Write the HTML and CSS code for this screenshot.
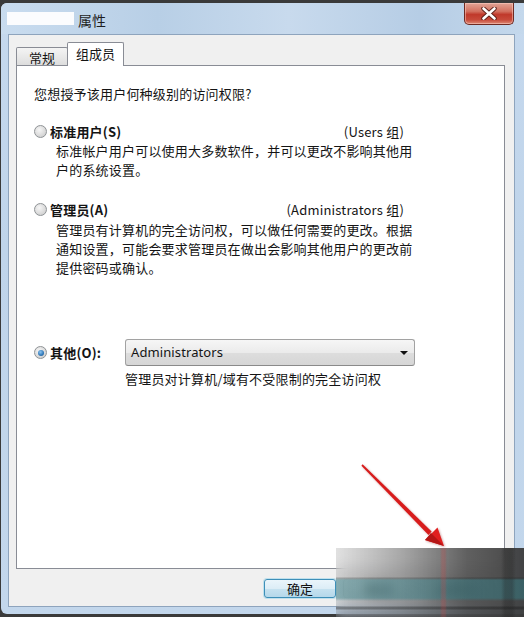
FILE: index.html
```html
<!DOCTYPE html>
<html lang="zh-CN">
<head>
    <meta charset="UTF-8">
    <meta name="viewport" content="width=device-width, initial-scale=1.0">
    <title>属性</title>
    <link rel="stylesheet" href="styles.css">
</head>
<body>
    <div class="window">
        <div class="titlebar">
            <span class="title-mask"></span>
            <span class="title">属性</span>
            <button class="close-btn" aria-label="关闭">
                <svg width="16" height="13" viewBox="0 0 16 13">
                    <path d="M2.5 1.5 L13.5 11.5 M13.5 1.5 L2.5 11.5" stroke="#5a1e16" stroke-width="4.4" stroke-linecap="round"/>
                    <path d="M2.5 1.5 L13.5 11.5 M13.5 1.5 L2.5 11.5" stroke="#ffffff" stroke-width="2.6" stroke-linecap="round"/>
                </svg>
            </button>
        </div>

        <div class="client">
            <div class="tabs">
                <div class="tab">常规</div>
                <div class="tab active">组成员</div>
            </div>

            <div class="panel">
                <p class="question">您想授予该用户何种级别的访问权限?</p>

                <div class="option first">
                    <div class="option-head">
                        <span class="radio"></span>
                        <span class="label">标准用户(S)</span>
                        <span class="group">(Users 组)</span>
                    </div>
                    <p class="desc">标准帐户用户可以使用大多数软件，并可以更改不影响其他用<br>户的系统设置。</p>
                </div>

                <div class="option second">
                    <div class="option-head">
                        <span class="radio"></span>
                        <span class="label">管理员(A)</span>
                        <span class="group">(Administrators 组)</span>
                    </div>
                    <p class="desc">管理员有计算机的完全访问权，可以做任何需要的更改。根据<br>通知设置，可能会要求管理员在做出会影响其他用户的更改前<br>提供密码或确认。</p>
                </div>

                <div class="option other">
                    <div class="option-head">
                        <span class="radio checked"></span>
                        <span class="label">其他(O):</span>
                        <div class="select">
                            <span>Administrators</span>
                            <span class="caret"></span>
                        </div>
                    </div>
                    <p class="desc">管理员对计算机/域有不受限制的完全访问权</p>
                </div>
            </div>

            <div class="buttons">
                <button class="btn default">确定</button>
                <button class="btn">取消</button>
                <button class="btn">应用(A)</button>
            </div>
        </div>
    </div>

    <!-- flèche rouge au-dessus de la fenêtre -->
    <svg class="arrow" width="524" height="617" viewBox="0 0 524 617">
        <polygon points="362.6,464.2 361.4,465.8 428.5,535 431.6,531.4" fill="#d81c1c"/>
        <polygon points="444,546 437.5,527.5 425,540" fill="#e01f1f"/>
        <polygon points="444,546 431,533 425,540" fill="#b51515"/>
    </svg>

    <div class="smudge"></div>
</body>
</html>
```

FILE: styles.css
```css
* { box-sizing: border-box; }

body {
    margin: 0;
    width: 524px;
    height: 617px;
    overflow: hidden;
    background: #3a3a3a;
    font-family: "Noto Sans CJK SC", "Noto Sans", sans-serif;
    font-size: 13px;
    color: #141414;
    position: relative;
}

p { margin: 0; }

/* cadre de la fenêtre */
.window {
    margin: 3px 0 0 1px;
    width: 523px;
    height: 611px;
    background: linear-gradient(180deg, #c6d9ee 0%, #bfd4ea 40%, #c3d7ec 100%);
    border-radius: 6px 0 0 6px;
}

.titlebar {
    height: 31px;
    display: flex;
    align-items: flex-start;
    background: linear-gradient(90deg, #c9dcef 0%, #b8cfe6 30%, #c8daed 55%, #b6cde5 80%, #c4d8ec 100%);
    border-radius: 6px 0 0 0;
}

.title-mask {
    margin: 9px 0 0 6px;
    width: 67px;
    height: 13px;
    background: #fbfcfe;
}

.title {
    margin: 7px 0 0 4px;
    font-size: 14px;
    line-height: 20px;
    color: #1e1e1e;
}

.close-btn {
    margin-left: auto;
    margin-right: 10px;
    width: 50px;
    height: 22px;
    padding: 0;
    border: 1px solid #6e2a22;
    border-top: none;
    border-radius: 0 0 5px 5px;
    background: linear-gradient(180deg, #e2a597 0%, #d2705f 40%, #c0392b 55%, #c74a3a 80%, #dd8a76 100%);
    display: flex;
    align-items: center;
    justify-content: center;
    box-shadow: inset 0 0 0 1px rgba(255, 210, 200, 0.5);
}

/* zone cliente */
.client {
    margin-left: 7px;
    width: 507px;
    height: 573px;
    background: #f0f0f0;
    border: 1px solid #8ea4bd;
    padding: 7px 9px 0 7px;
}

.tabs {
    display: flex;
    align-items: flex-end;
    height: 23px;
}

.tab {
    width: 52px;
    height: 18px;
    border: 1px solid #898c95;
    border-bottom: none;
    border-radius: 2px 2px 0 0;
    background: linear-gradient(180deg, #f4f4f4 0%, #e9e9e9 50%, #dddddd 100%);
    text-align: center;
    line-height: 17px;
    padding-top: 1px;
}

.tab.active {
    width: 57px;
    height: 24px;
    margin-left: -1px;
    margin-bottom: -1px;
    background: #ffffff;
    position: relative;
    line-height: 22px;
    padding-top: 0;
}

.panel {
    height: 504px;
    background: #ffffff;
    border: 1px solid #898c95;
    padding: 18px 17px 0 17px;
    line-height: 19px;
    letter-spacing: 0.2px;
}

.option-head {
    display: flex;
    align-items: center;
    width: 370px;
    height: 20px;
}

.option.first { margin-top: 18px; }
.option.second { margin-top: 20px; }
.option.other { margin-top: 62px; }
.option.other .option-head { height: 27px; width: auto; }

.radio {
    width: 13px;
    height: 13px;
    margin: 0 3px 0 0;
    border-radius: 50%;
    border: 1px solid #8f9396;
    background: radial-gradient(circle at 40% 35%, #f6f6f6 0%, #dcdcdc 55%, #c6c6c6 100%);
    position: relative;
}

.radio.checked::after {
    content: "";
    position: absolute;
    left: 2.5px;
    top: 2.5px;
    width: 6px;
    height: 6px;
    border-radius: 50%;
    background: radial-gradient(circle at 40% 35%, #8cc4f0 0%, #2f77b8 60%, #1b4f80 100%);
}

.label { font-weight: bold; }

.option.other .label { width: 75px; }

.group { margin-left: auto; }

.desc {
    padding-left: 22px;
    white-space: nowrap;
}

.option.second .desc { margin-top: 1px; }
.option.other .desc { margin-top: 3px; padding-left: 91px; }

/* liste déroulante */
.select {
    width: 290px;
    height: 27px;
    border: 1px solid #a2a2a2;
    border-bottom-color: #8a8a8a;
    border-radius: 3px;
    background: linear-gradient(180deg, #f6f6f6 0%, #ebebeb 50%, #dddddd 52%, #d6d6d6 100%);
    display: flex;
    align-items: center;
    padding: 0 6px 0 5px;
    font-family: "Noto Sans", "Noto Sans CJK SC", sans-serif;
    font-size: 13px;
    letter-spacing: 0.1px;
}

.caret {
    margin-left: auto;
    width: 0;
    height: 0;
    border-left: 4px solid transparent;
    border-right: 4px solid transparent;
    border-top: 4px solid #111;
}

.buttons {
    display: flex;
    justify-content: flex-end;
    gap: 7px;
    margin-top: 10px;
    padding-right: 11px;
}

.btn {
    width: 72px;
    height: 19px;
    padding: 0;
    border: 1px solid #707070;
    border-radius: 3px;
    background: linear-gradient(180deg, #f2f2f2 0%, #ebebeb 50%, #dddddd 51%, #cfcfcf 100%);
    font-family: "Noto Sans CJK SC", sans-serif;
    font-size: 13px;
    line-height: 17px;
    color: #111;
}

.btn.default {
    border-color: #3d8fb8;
    background: linear-gradient(180deg, #eaf5fb 0%, #dcedf6 50%, #c6e2f0 51%, #b5d8ea 100%);
    box-shadow: 0 0 0 1px rgba(120, 200, 230, 0.4);
}

.arrow {
    position: absolute;
    left: 0;
    top: 0;
    pointer-events: none;
    filter: drop-shadow(1px 1px 1px rgba(120, 0, 0, 0.35));
}

/* tache floue en bas à droite */
.smudge {
    position: absolute;
    left: 336px;
    top: 548px;
    width: 188px;
    height: 69px;
    backdrop-filter: blur(6px);
    background:
        linear-gradient(90deg, transparent 104px, rgba(200, 70, 70, 0.25) 106px, rgba(200, 70, 70, 0.25) 109px, transparent 111px),
        linear-gradient(90deg, transparent 165px, rgba(30, 30, 30, 0.3) 169px, rgba(30, 30, 30, 0.3) 176px, transparent 180px),
        linear-gradient(180deg, transparent 29px, rgba(20, 20, 20, 0.25) 30px, rgba(50, 130, 140, 0.45) 32px, rgba(50, 130, 140, 0.45) 50px, transparent 53px, transparent 58px, rgba(20, 20, 20, 0.35) 59px, rgba(20, 20, 20, 0.35) 61px, transparent 62px),
        linear-gradient(90deg, rgba(90, 90, 90, 0.18) 0%, rgba(80, 80, 80, 0.5) 35%, rgba(60, 60, 60, 0.82) 70%, rgba(55, 55, 55, 0.93) 100%);
}
```
